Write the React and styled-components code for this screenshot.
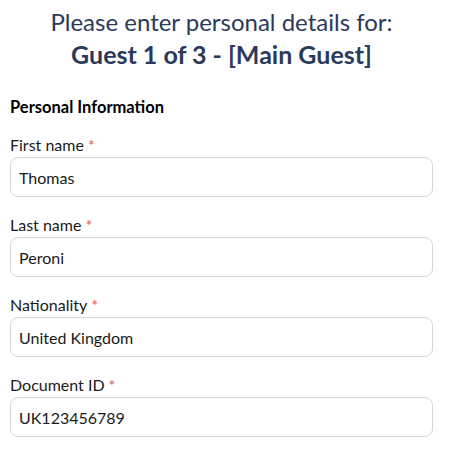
import React, { useState } from 'react';
import styled, { createGlobalStyle } from 'styled-components';

const GlobalStyle = createGlobalStyle`
  body {
    margin: 0;
    background: #fff;
    font-family: Lato, 'Open Sans', sans-serif;
  }
`;

const Page = styled.div`
  padding: 6px 17px 0 10px;
`;

const Heading = styled.div`
  text-align: center;
  color: #2b3a5b;
  font-size: 24px;
  line-height: 32px;
`;

const Strong = styled.div`
  font-size: 25px;
  font-weight: 700;
`;

const SectionTitle = styled.div`
  margin-top: 27px;
  font-size: 16.5px;
  line-height: 20px;
  font-weight: 700;
  color: #000;
`;

const Field = styled.label`
  display: flex;
  flex-direction: column;
  margin-top: 18px;
`;

const Label = styled.span`
  font-size: 16px;
  line-height: 20px;
  color: #1a1a1a;
  margin-bottom: 2px;
`;

const Star = styled.span`
  color: #d9534f;
  margin-left: 4px;
`;

const Input = styled.input`
  box-sizing: border-box;
  height: 40px;
  width: 100%;
  padding: 0 8px;
  border: 1px solid #d6d6d6;
  border-radius: 8px;
  font-family: inherit;
  font-size: 16px;
  color: #1a1a1a;
  outline: none;
`;

const fields = [
  { label: 'First name', value: 'Thomas' },
  { label: 'Last name', value: 'Peroni' },
  { label: 'Nationality', value: 'United Kingdom' },
  { label: 'Document ID', value: 'UK123456789' },
];

const App = () => {
  const [values, setValues] = useState(fields.map((f) => f.value));

  return (
    <Page>
      <GlobalStyle />
      <Heading>
        Please enter personal details for:
        <Strong>Guest 1 of 3 - [Main Guest]</Strong>
      </Heading>
      <SectionTitle>Personal Information</SectionTitle>
      {fields.map((f, i) => (
        <Field key={f.label}>
          <Label>
            {f.label}
            <Star>*</Star>
          </Label>
          <Input
            value={values[i]}
            onChange={(e) =>
              setValues(values.map((v, j) => (j === i ? e.target.value : v)))
            }
          />
        </Field>
      ))}
    </Page>
  );
};

export default App;
